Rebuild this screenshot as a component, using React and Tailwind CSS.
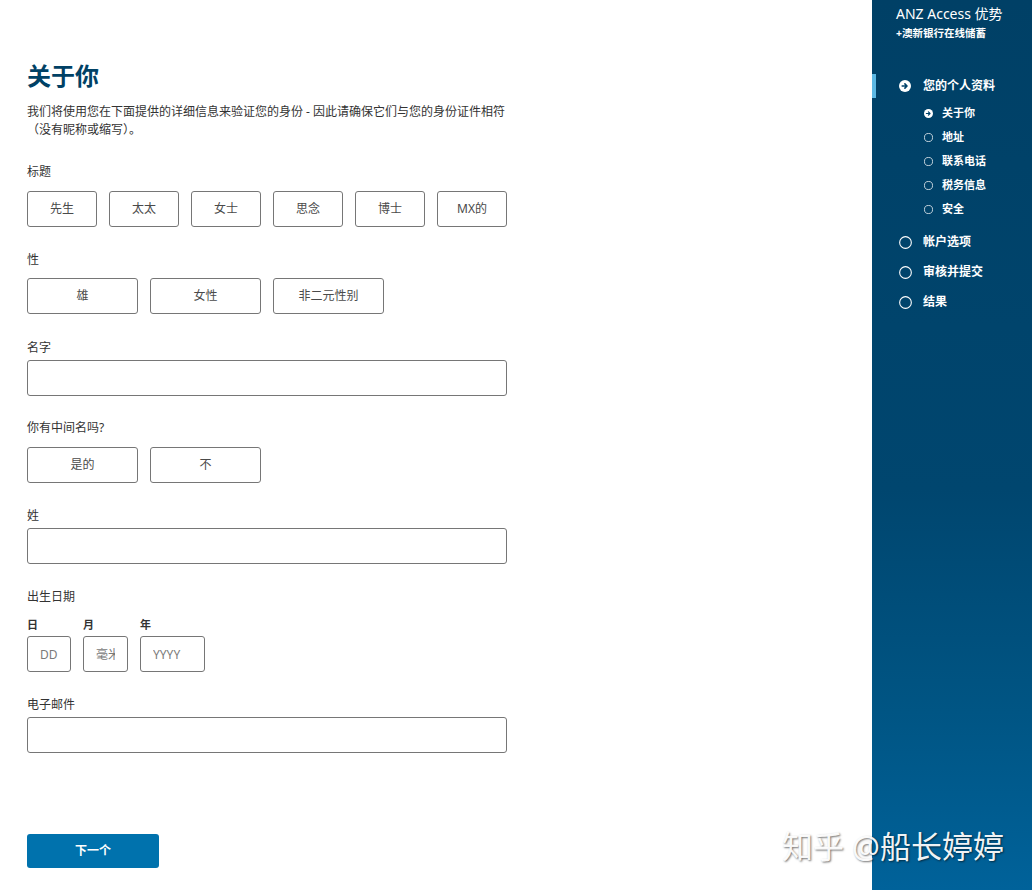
import * as React from "react"

const FONT = { fontFamily: '"Noto Sans", "Noto Sans CJK SC", sans-serif' }

const titles = ["先生", "太太", "女士", "思念", "博士", "MX的"]
const genders = ["雄", "女性", "非二元性别"]
const subSteps = ["地址", "联系电话", "税务信息", "安全"]
const mainSteps = ["帐户选项", "审核并提交", "结果"]

function Label({ children, className = "" }) {
  return <div className={`text-[12px] leading-[18px] text-[#333] ${className}`}>{children}</div>
}

function Choice({ children, wide }) {
  return (
    <button
      type="button"
      className={`${wide ? "w-[111px]" : "w-[70px]"} h-[36px] rounded-[3px] border border-[#767676] bg-white text-[12px] text-[#4a4a4a]`}
    >
      {children}
    </button>
  )
}

function TextInput() {
  return <input type="text" className="mt-[3px] block h-[36px] w-[480px] rounded-[3px] border border-[#767676] bg-white" />
}

function ArrowDot({ size }) {
  return (
    <svg width={size} height={size} viewBox="0 0 12 12">
      <circle cx="6" cy="6" r="6" fill="#fff" />
      <path d="M3.2 6h4.6M5.9 3.9 8 6 5.9 8.1" stroke="#00426a" strokeWidth="1.6" fill="none" strokeLinecap="round" strokeLinejoin="round" />
    </svg>
  )
}

function RingDot({ size }) {
  return (
    <svg width={size} height={size} viewBox="0 0 12 12">
      <circle cx="6" cy="6" r="5.4" fill="none" stroke="#fff" strokeWidth="1" />
    </svg>
  )
}

function Sidebar() {
  return (
    <aside className="relative h-full w-[160px] shrink-0 bg-[linear-gradient(180deg,#004066_0%,#00466f_55%,#005584_80%,#00629a_100%)] text-white">
      <div className="pl-[24px] pt-[4px]">
        <div className="text-[14px] leading-[20px]">ANZ Access 优势</div>
        <div className="mt-[1px] text-[10.5px] font-bold leading-[16px]">+澳新银行在线储蓄</div>
      </div>

      <div className="relative mt-[32px]">
        <div className="absolute left-0 top-[1px] h-[24px] w-[4px] bg-[#5cb8e4]" />
        <div className="flex h-[26px] items-center pl-[27px]">
          <ArrowDot size={12} />
          <span className="ml-[12px] text-[12px] font-bold">您的个人资料</span>
        </div>
        <div className="mt-[2px] flex h-[24px] items-center pl-[52px]">
          <ArrowDot size={9} />
          <span className="ml-[9px] text-[11px] font-bold">关于你</span>
        </div>
        {subSteps.map((s) => (
          <div key={s} className="flex h-[24px] items-center pl-[52px]">
            <RingDot size={9} />
            <span className="ml-[9px] text-[11px] font-bold">{s}</span>
          </div>
        ))}
        <div className="mt-[6px]">
          {mainSteps.map((s) => (
            <div key={s} className="flex h-[30px] items-center pl-[27px]">
              <RingDot size={13} />
              <span className="ml-[11px] text-[12px] font-bold">{s}</span>
            </div>
          ))}
        </div>
      </div>
    </aside>
  )
}

export default function App() {
  return (
    <div className="relative flex h-[890px] w-[1032px] overflow-hidden bg-white" style={FONT}>
      <main className="flex-1 pl-[27px] pt-[60px]">
        <h1 className="text-[24px] font-bold leading-[32px] text-[#004165]">关于你</h1>
        <p className="mt-[11px] text-[12px] leading-[18px] text-[#333]">
          我们将使用您在下面提供的详细信息来验证您的身份 - 因此请确保它们与您的身份证件相符
          <br />
          （没有昵称或缩写）。
        </p>

        <Label className="mt-[24px]">标题</Label>
        <div className="mt-[10px] flex gap-[12px]">
          {titles.map((t) => (
            <Choice key={t}>{t}</Choice>
          ))}
        </div>

        <Label className="mt-[24px]">性</Label>
        <div className="mt-[9px] flex gap-[12px]">
          {genders.map((g) => (
            <Choice key={g} wide>
              {g}
            </Choice>
          ))}
        </div>

        <Label className="mt-[25px]">名字</Label>
        <TextInput />

        <Label className="mt-[23px]">你有中间名吗?</Label>
        <div className="mt-[10px] flex gap-[12px]">
          <Choice wide>是的</Choice>
          <Choice wide>不</Choice>
        </div>

        <Label className="mt-[24px]">姓</Label>
        <TextInput />

        <Label className="mt-[24px]">出生日期</Label>
        <div className="mt-[10px] flex gap-[12px]">
          {[
            ["日", "DD", "w-[44px]"],
            ["月", "毫米", "w-[45px]"],
            ["年", "YYYY", "w-[65px]"],
          ].map(([l, ph, w]) => (
            <div key={l}>
              <div className="text-[11px] font-bold leading-[18px] text-[#333]">{l}</div>
              <input
                type="text"
                placeholder={ph}
                className={`${w} mt-[2px] block h-[36px] rounded-[3px] border border-[#767676] px-[12px] text-[12px] placeholder:text-[#7a7a7a]`}
              />
            </div>
          ))}
        </div>

        <Label className="mt-[24px]">电子邮件</Label>
        <TextInput />

        <button
          type="button"
          className="mt-[81px] block h-[34px] w-[132px] rounded-[3px] bg-[#0072ad] text-[12px] font-bold text-white"
        >
          下一个
        </button>
      </main>
      <Sidebar />

      <div className="pointer-events-none absolute left-[782px] top-[826px] text-[31px] leading-[40px] text-white/95 [text-shadow:1px_1px_2px_rgba(0,0,0,0.55)]">
        知乎 @船长婷婷
      </div>
    </div>
  )
}
